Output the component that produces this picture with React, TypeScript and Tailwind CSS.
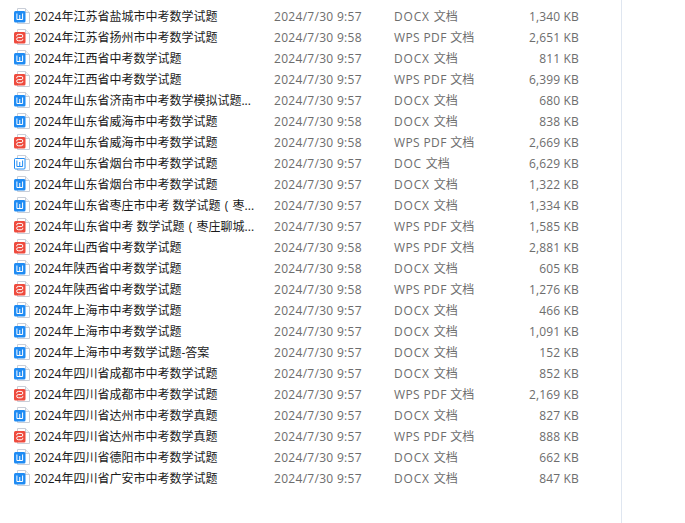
const W = 'word', P = 'pdf', O = 'doc';
const rows: [string, string, string, string, string][] = [
  ['2024年江苏省盐城市中考数学试题', '9:57', 'DOCX', '1,340 KB', W],
  ['2024年江苏省扬州市中考数学试题', '9:58', 'WPS PDF', '2,651 KB', P],
  ['2024年江西省中考数学试题', '9:57', 'DOCX', '811 KB', W],
  ['2024年江西省中考数学试题', '9:57', 'WPS PDF', '6,399 KB', P],
  ['2024年山东省济南市中考数学模拟试题...', '9:57', 'DOCX', '680 KB', W],
  ['2024年山东省威海市中考数学试题', '9:58', 'DOCX', '838 KB', W],
  ['2024年山东省威海市中考数学试题', '9:58', 'WPS PDF', '2,669 KB', P],
  ['2024年山东省烟台市中考数学试题', '9:57', 'DOC', '6,629 KB', O],
  ['2024年山东省烟台市中考数学试题', '9:57', 'DOCX', '1,322 KB', W],
  ['2024年山东省枣庄市中考 数学试题（枣...', '9:57', 'DOCX', '1,334 KB', W],
  ['2024年山东省中考 数学试题（枣庄聊城...', '9:57', 'WPS PDF', '1,585 KB', P],
  ['2024年山西省中考数学试题', '9:58', 'WPS PDF', '2,881 KB', P],
  ['2024年陕西省中考数学试题', '9:58', 'DOCX', '605 KB', W],
  ['2024年陕西省中考数学试题', '9:58', 'WPS PDF', '1,276 KB', P],
  ['2024年上海市中考数学试题', '9:57', 'DOCX', '466 KB', W],
  ['2024年上海市中考数学试题', '9:57', 'DOCX', '1,091 KB', W],
  ['2024年上海市中考数学试题-答案', '9:57', 'DOCX', '152 KB', W],
  ['2024年四川省成都市中考数学试题', '9:57', 'DOCX', '852 KB', W],
  ['2024年四川省成都市中考数学试题', '9:57', 'WPS PDF', '2,169 KB', P],
  ['2024年四川省达州市中考数学真题', '9:57', 'DOCX', '827 KB', W],
  ['2024年四川省达州市中考数学真题', '9:57', 'WPS PDF', '888 KB', P],
  ['2024年四川省德阳市中考数学试题', '9:57', 'DOCX', '662 KB', W],
  ['2024年四川省广安市中考数学试题', '9:57', 'DOCX', '847 KB', W],
];

const typeTracking: Record<string, string> = {
  DOCX: 'tracking-[0.8px]',
  DOC: 'tracking-[0.75px]',
  'WPS PDF': 'tracking-[0.38px]',
};

function FileIcon({ kind }: { kind: string }) {
  return (
    <svg width="16" height="16" viewBox="0 0 16 16" className="mt-[-1px] shrink-0">
      <path d="M3.5 0.5H11.5L15.5 4.5V15.5H3.5Z" fill="#fff" stroke="#c9ced8" />
      <path d="M11.5 0.5V4.5H15.5" fill="#f1f3f6" stroke="#c9ced8" />
      {kind === 'pdf' ? (
        <>
          <rect x="0" y="3" width="11.5" height="11.5" rx="1.5" fill="#ee4b3e" />
          <path
            d="M2.7 7.3V7A1.6 1.6 0 0 1 4.3 5.4H7.2A1.6 1.6 0 0 1 7.2 8.6H4.3A1.6 1.6 0 0 0 4.3 11.8H7.2A1.6 1.6 0 0 0 8.8 10.2V9.9"
            fill="none"
            stroke="#fff"
            strokeWidth="1"
          />
        </>
      ) : kind === 'word' ? (
        <>
          <rect x="0" y="3" width="11.5" height="11.5" rx="1.5" fill="#1f8bf3" />
          <path d="M2.9 5.5V11.5H8.6V5.5M5.75 7V11.5" fill="none" stroke="#fff" strokeWidth="1" />
        </>
      ) : (
        <>
          <rect x="0.5" y="3.5" width="10.5" height="10.5" rx="1" fill="#fff" stroke="#1f8bf3" />
          <path d="M2.9 5.5V11.5H8.6V5.5M5.75 7V11.5" fill="none" stroke="#1f8bf3" strokeWidth="1" />
        </>
      )}
    </svg>
  );
}

function Name({ text }: { text: string }) {
  const parts = text.split('（');
  if (parts.length === 1) return <>{text}</>;
  return (
    <>
      {parts[0]}
      <span className="inline-block w-[12px] text-center">(</span>
      {parts[1]}
    </>
  );
}

export default function App() {
  return (
    <div className="flex h-[523px] w-[685px] overflow-hidden bg-white text-[12px] font-['Open_Sans','Noto_Sans_CJK_SC',sans-serif]">
      <div className="w-[621px] pt-[6px]">
        {rows.map(([name, time, type, size, kind], i) => (
          <div key={i} className="flex h-[21px] items-center pl-[14px] leading-[21px]">
            <FileIcon kind={kind} />
            <div className="ml-[4px] w-[240px] whitespace-nowrap text-[#1a1a1a]">
              <Name text={name} />
            </div>
            <div className="w-[120px] whitespace-nowrap tracking-[0.3px] text-[#6d6d6d]">2024/7/30 {time}</div>
            <div className="w-[110px] whitespace-nowrap text-[#6d6d6d]">
              <span className={typeTracking[type]}>{type} </span>文档
            </div>
            <div className="w-[75px] whitespace-nowrap text-right tracking-[0.15px] text-[#6d6d6d]">{size}</div>
          </div>
        ))}
      </div>
      <div className="w-px bg-[#dfe6f0]" />
    </div>
  );
}
